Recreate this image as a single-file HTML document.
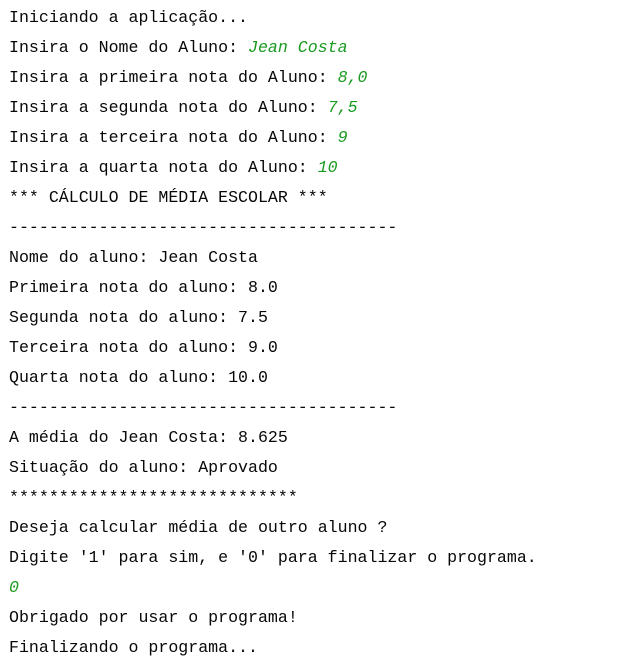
<!DOCTYPE html>
<html><head><meta charset="utf-8"><style>
body{margin:0;background:#fff;width:619px;height:670px;overflow:hidden}
pre{margin:0;position:absolute;left:9px;top:3px;font-family:"Liberation Mono","DejaVu Sans Mono",monospace;font-size:16.6px;line-height:30px;color:#080808}
i{color:#1a9a20}
</style></head><body><pre>Iniciando a aplicação...
Insira o Nome do Aluno: <i>Jean Costa</i>
Insira a primeira nota do Aluno: <i>8,0</i>
Insira a segunda nota do Aluno: <i>7,5</i>
Insira a terceira nota do Aluno: <i>9</i>
Insira a quarta nota do Aluno: <i>10</i>
*** CÁLCULO DE MÉDIA ESCOLAR ***
---------------------------------------
Nome do aluno: Jean Costa
Primeira nota do aluno: 8.0
Segunda nota do aluno: 7.5
Terceira nota do aluno: 9.0
Quarta nota do aluno: 10.0
---------------------------------------
A média do Jean Costa: 8.625
Situação do aluno: Aprovado
*****************************
Deseja calcular média de outro aluno ?
Digite '1' para sim, e '0' para finalizar o programa.
<i>0</i>
Obrigado por usar o programa!
Finalizando o programa...</pre></body></html>
